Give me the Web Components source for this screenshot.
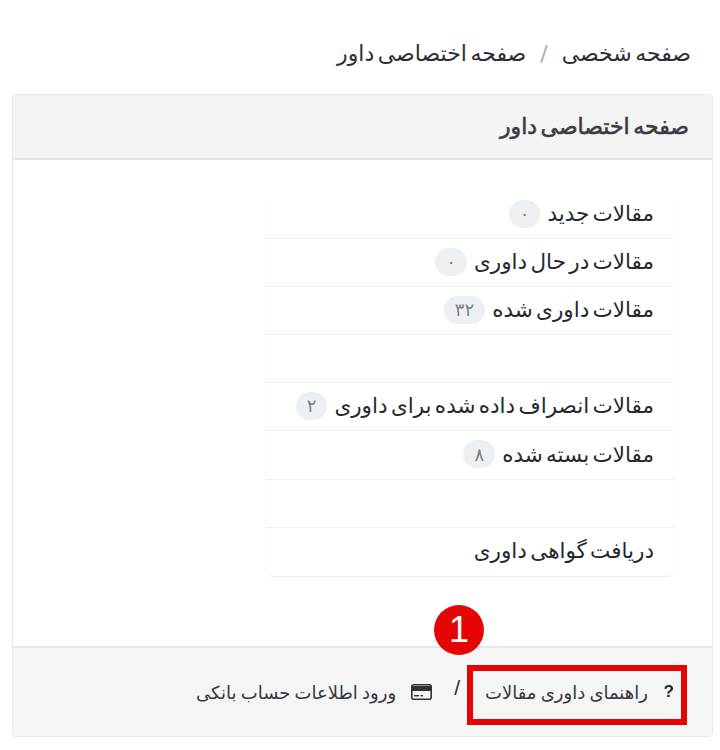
<!DOCTYPE html>
<html lang="fa" dir="rtl">
<head>
<meta charset="utf-8">
<title>صفحه اختصاصی داور</title>
<style>
html, body { margin: 0; background: #fff; }
body {
    width: 720px;
    height: 750px;
    overflow: hidden;
    font-family: "DejaVu Sans", sans-serif;
    color: #212529;
}
</style>
</head>
<body>
<page-crumbs>
    <span>صفحه شخصی</span>
    <span>صفحه اختصاصی داور</span>
</page-crumbs>

<panel-card>
    <span slot="title">صفحه اختصاصی داور</span>
    <link-list>
        <list-row>مقالات جدید <count-badge>۰</count-badge></list-row>
        <list-row>مقالات در حال داوری <count-badge>۰</count-badge></list-row>
        <list-row>مقالات داوری شده <count-badge>۳۲</count-badge></list-row>
        <list-row></list-row>
        <list-row>مقالات انصراف داده شده برای داوری <count-badge>۲</count-badge></list-row>
        <list-row>مقالات بسته شده <count-badge>۸</count-badge></list-row>
        <list-row></list-row>
        <list-row>دریافت گواهی داوری</list-row>
    </link-list>
    <footer-link slot="footer" icon="help" marked>راهنمای داوری مقالات</footer-link>
    <footer-sep slot="footer"></footer-sep>
    <footer-link slot="footer" icon="card">ورود اطلاعات حساب بانکی</footer-link>
</panel-card>

<script>
// small helper, every element just sets its own shadow html
class Base extends HTMLElement {
    constructor() {
        super();
        this.attachShadow({mode: 'open'});
        this.shadowRoot.innerHTML = this.constructor.html;
    }
}

class PageCrumbs extends Base {
    static html = `
        <style>
        :host {
            display: flex;
            align-items: center;
            height: 94px;
            padding: 12px 29px 0 0;
            box-sizing: border-box;
            font-size: 22px;
            word-spacing: -3.5px;
            color: #2b2f33;
        }
        ::slotted(span:first-child)::after {
            content: "/";
            color: #a9aeb3;
            padding: 0 14px;
        }
        </style>
        <slot></slot>
    `;
}

class PanelCard extends Base {
    static html = `
        <style>
        :host {
            display: block;
            width: 701px;
            height: 643px;
            margin-right: 7px;
            box-sizing: border-box;
            border: 1px solid #e6eaee;
            border-radius: 4px;
        }
        .wrap { display: flex; flex-direction: column; height: 100%; }
        header {
            height: 65px;
            box-sizing: border-box;
            display: flex;
            align-items: center;
            padding-right: 23px;
            background: #f4f4f5;
            border-bottom: 2px solid #e5e6e7;
            border-radius: 4px 4px 0 0;
            font-size: 22px;
            word-spacing: -3.5px;
            -webkit-text-stroke: .6px #3a3d40; /* bold of dejavu is too wide */
            color: #3a3d40;
        }
        main { flex: 1; padding: 31px 36px 0 0; }
        footer {
            position: relative;
            height: 90px;
            box-sizing: border-box;
            display: flex;
            align-items: center;
            background: #f5f5f6;
            border-top: 2px solid #e5e6e7;
        }
        </style>
        <div class="wrap">
            <header><slot name="title"></slot></header>
            <main><slot></slot></main>
            <footer><slot name="footer"></slot></footer>
        </div>
    `;
}

class LinkList extends Base {
    static html = `
        <style>
        :host {
            display: block;
            width: 410px;
            border-radius: 0 0 8px 8px;
            box-shadow: 0 1px 1px rgba(0,0,0,.08);
        }
        </style>
        <slot></slot>
    `;
}

class ListRow extends Base {
    static html = `
        <style>
        :host {
            display: flex;
            align-items: center;
            gap: 7px;
            height: 48.1px;
            box-sizing: border-box;
            padding: 0 22px 2px;
            border-bottom: 1.5px solid #eeeff0;
            font-size: 21.5px;
            word-spacing: -3.5px;
            color: #25292d;
        }
        :host(:last-child) { border-bottom: 0; }
        </style>
        <slot></slot>
    `;
}

class CountBadge extends Base {
    static html = `
        <style>
        :host {
            display: inline-flex;
            align-items: center;
            justify-content: center;
            min-width: 30px;
            height: 28px;
            padding: 0 11px;
            box-sizing: border-box;
            border-radius: 14px;
            background: #edf0f2;
            color: #7a7f84;
            font-size: 18px;
        }
        </style>
        <slot></slot>
    `;
}

class FooterLink extends Base {
    static html = `
        <style>
        :host {
            display: inline-flex;
            align-items: center;
            gap: 16px;
            font-size: 18px;
            word-spacing: -1.5px;
            color: #34383c;
        }
        :host([marked]) { margin-right: 38px; }
        :host([icon="card"]) { gap: 15px; }
        svg { display: block; }
        .q { font: bold 17px "Liberation Sans", sans-serif; color: #1f2a36; width: 10px; text-align: center; }
        .mark {
            position: absolute;
            display: none;
            right: 25px;
            top: 17px;
            width: 220px;
            height: 60px;
            box-sizing: border-box;
            border: 6px solid #e60505;
        }
        .num {
            position: absolute;
            display: none;
            right: 228px;
            top: -43px;
            width: 50px;
            height: 50px;
            border-radius: 50%;
            background: #e60505;
            color: #fff;
            font: 36px/50px "Liberation Sans", sans-serif;
            text-align: center;
        }
        :host([marked]) .mark, :host([marked]) .num { display: block; }
        </style>
        <span id="icon"></span>
        <slot></slot>
        <span class="mark"></span>
        <span class="num">1</span>
    `;
    connectedCallback() {
        const icon = this.shadowRoot.getElementById('icon');
        if (this.getAttribute('icon') === 'help') {
            icon.className = 'q';
            icon.textContent = '?';
        } else {
            icon.innerHTML = `<svg width="21" height="16" viewBox="0 0 21 16">
                <rect x=".8" y=".8" width="19.4" height="14.4" rx="2" fill="#f5f5f6" stroke="#2f3338" stroke-width="1.6"/>
                <rect x="1" y="2" width="19" height="5" fill="#2f3338"/>
                <rect x="3" y="11" width="5" height="1.4" fill="#2f3338"/>
                <rect x="9.5" y="11" width="2.5" height="1.4" fill="#2f3338"/>
            </svg>`;
        }
    }
}

class FooterSep extends Base {
    static html = `
        <style>
        :host {
            display: inline-block;
            margin: -8px 25px 0 22px;
            font: 21px "Liberation Sans", sans-serif;
            color: #2b2f33;
        }
        </style>
        /
    `;
}

customElements.define('page-crumbs', PageCrumbs);
customElements.define('panel-card', PanelCard);
customElements.define('link-list', LinkList);
customElements.define('list-row', ListRow);
customElements.define('count-badge', CountBadge);
customElements.define('footer-link', FooterLink);
customElements.define('footer-sep', FooterSep);
</script>
</body>
</html>
